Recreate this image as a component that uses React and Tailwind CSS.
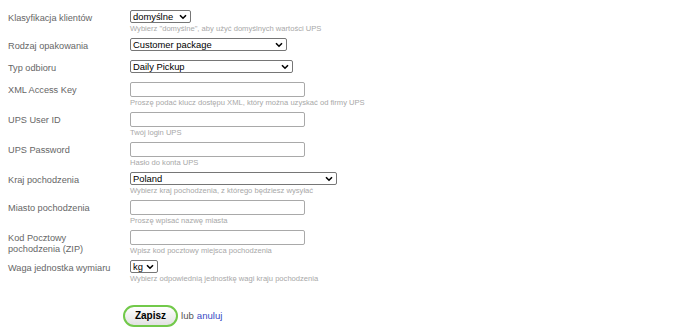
import React, { useState } from "react";

const Chevron = () => (
  <svg width="8" height="6" viewBox="0 0 8 6" className="shrink-0">
    <path d="M1 1.2 L4 4.2 L7 1.2" fill="none" stroke="#000" strokeWidth="1.6" />
  </svg>
);

// fake native select, Chrome look
const Select = ({ value, width }) => (
  <div
    className="flex items-center justify-between h-[13px] border border-[#767676] rounded-[2px] bg-white pl-[2px] pr-[3px] text-[9.4px] leading-[11px] text-black"
    style={{ width }}
  >
    <span>{value}</span>
    <Chevron />
  </div>
);

const Input = ({ width = 175 }) => (
  <input
    type="text"
    className="block h-[15px] border border-[#a9a9a9] rounded-[2px] bg-white"
    style={{ width }}
  />
);

const Hint = ({ children }) => (
  <p className="mt-[1px] h-[9px] text-[7.6px] leading-[9px] text-[#a8a8a8] whitespace-nowrap">{children}</p>
);

const Row = ({ label, children }) => (
  <div className="flex pb-[5px]">
    <div className="w-[130px] shrink-0 pl-[8px] pr-[14px] pt-[3px] min-h-[17px] text-[9.2px] leading-[11px] text-[#666]">
      {label}
    </div>
    <div>{children}</div>
  </div>
);

const fields = [
  { label: "Klasyfikacja klientów", select: "domyślne", w: 61, hint: "Wybierz \"domyślne\", aby użyć domyślnych wartości UPS" },
  { label: "Rodzaj opakowania", select: "Customer package", w: 157 },
  { label: "Typ odbioru", select: "Daily Pickup", w: 163 },
  { label: "XML Access Key", hint: "Proszę podać klucz dostępu XML, który można uzyskać od firmy UPS" },
  { label: "UPS User ID", hint: "Twój login UPS" },
  { label: "UPS Password", hint: "Hasło do konta UPS" },
  { label: "Kraj pochodzenia", select: "Poland", w: 207, hint: "Wybierz kraj pochodzenia, z którego będziesz wysyłać" },
  { label: "Miasto pochodzenia", hint: "Proszę wpisać nazwę miasta" },
  { label: "Kod Pocztowy pochodzenia (ZIP)", hint: "Wpisz kod pocztowy miejsca pochodzenia" },
  { label: "Waga jednostka wymiaru", select: "kg", w: 28, hint: "Wybierz odpowiednią jednostkę wagi kraju pochodzenia" },
];

export default function App() {
  const [saved, setSaved] = useState(false);

  return (
    <div className="w-[700px] h-[336px] bg-white pt-[10px] font-['Liberation_Sans',Arial,sans-serif] overflow-hidden">
      {fields.map((f) => (
        <Row key={f.label} label={f.label}>
          {f.select ? <Select value={f.select} width={f.w} /> : <Input />}
          {f.hint && <Hint>{f.hint}</Hint>}
        </Row>
      ))}

      {/* actions */}
      <div className="flex items-center pl-[123px] mt-[17px] text-[9.6px]">
        <button
          onClick={() => setSaved(!saved)}
          className="h-[22px] w-[55px] rounded-[11px] border-2 border-[#72c94a] bg-gradient-to-b from-white to-[#e2e2e2] font-bold text-black text-[10px] leading-none"
        >
          Zapisz
        </button>
        <span className="ml-[3px] text-[#555]">lub</span>
        <a href="#" className="ml-[3px] text-[#3a4bc4]">anuluj</a>
      </div>
    </div>
  );
}
